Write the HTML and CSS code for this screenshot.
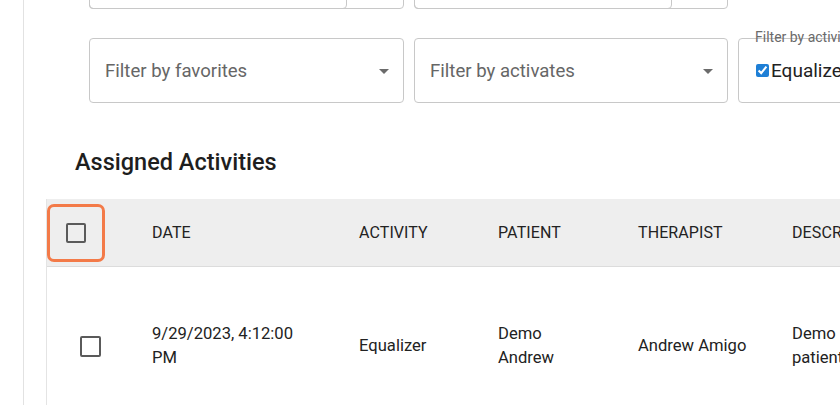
FILE: index.html
```html
<!DOCTYPE html>
<html lang="en">
  <head>
    <meta charset="UTF-8" />
    <meta name="viewport" content="width=device-width, initial-scale=1.0" />
    <title>Assigned Activities</title>
    <link rel="stylesheet" href="styles.css">
  </head>
  <body>
    <div class="layout">
      <aside class="sidebar"></aside>

      <main class="content">
        <div class="filters">
          <div class="field field-date"><div class="field-inner"></div></div>
          <div class="field field-date"><div class="field-inner"></div></div>

          <div class="field field-select row-start">
            <span class="placeholder">Filter by favorites</span>
            <span class="arrow"></span>
          </div>
          <div class="field field-select">
            <span class="placeholder">Filter by activates</span>
            <span class="arrow"></span>
          </div>
          <div class="field field-checks">
            <span class="legend">Filter by activities</span>
            <label class="check">
              <input type="checkbox" checked />
              <span>Equalizer</span>
            </label>
          </div>
        </div>

        <h2 class="title">Assigned Activities</h2>

        <div class="grid">
          <div class="grid-row grid-head">
            <div class="cell cell-check">
              <span class="focus-ring"><span class="box"></span></span>
            </div>
            <div class="cell">DATE</div>
            <div class="cell">ACTIVITY</div>
            <div class="cell">PATIENT</div>
            <div class="cell">THERAPIST</div>
            <div class="cell">DESCRIPTION</div>
          </div>

          <div class="grid-row grid-body">
            <div class="cell cell-check"><span class="box box-row"></span></div>
            <div class="cell"><span class="wrap w-date">9/29/2023, 4:12:00 PM</span></div>
            <div class="cell">Equalizer</div>
            <div class="cell"><span class="wrap w-patient">Demo Andrew</span></div>
            <div class="cell">Andrew Amigo</div>
            <div class="cell"><span class="wrap w-desc">Demo patient</span></div>
          </div>
        </div>
      </main>
    </div>
  </body>
</html>
```

FILE: styles.css
```css
body {
  margin: 0;
  font-family: Roboto, "Liberation Sans", sans-serif;
  background-color: #ffffff;
  color: #222222;
  overflow: hidden;
}

.layout {
  display: flex;
  height: 405px;
}

.sidebar {
  width: 23px;
  flex-shrink: 0;
  border-right: 1px solid #e2e2e2;
}

.content {
  flex: 1;
  min-width: 0;
}

/* filters */

.filters {
  display: grid;
  grid-template-columns: 315px 314px 314px;
  column-gap: 10px;
  row-gap: 29px;
  margin: -56px 0 0 65px;
}

.row-start {
  grid-column-start: 1;
}

.field {
  height: 65px;
  box-sizing: border-box;
  border: 1px solid #c8c8c8;
  border-radius: 4px;
  display: flex;
  align-items: center;
  position: relative;
}

.field-date {
  align-items: stretch;
}

.field-inner {
  width: 256px;
  margin: -1px 0 -1px -1px;
  border: 1px solid #c8c8c8;
  border-radius: 4px;
}

.field-select {
  padding: 0 14px 0 15px;
  justify-content: space-between;
}

.placeholder {
  font-size: 18.6px;
  color: #666666;
}

.arrow {
  width: 0;
  height: 0;
  border-left: 5px solid transparent;
  border-right: 5px solid transparent;
  border-top: 5px solid #6b6b6b;
  margin-top: 1px;
}

.field-checks {
  padding-left: 17px;
}

.legend {
  position: absolute;
  top: -10px;
  left: 16px;
  font-size: 14px;
  color: #6a6a6a;
  white-space: nowrap;
}

.check {
  display: flex;
  align-items: center;
  font-size: 19px;
  color: #222222;
}

.check input {
  width: 13px;
  height: 13px;
  margin: 0 2px 0 0;
  accent-color: #1e7fd6;
}

/* table */

.title {
  margin: 45px 0 23px 51px;
  font-size: 23.5px;
  line-height: 28px;
  font-weight: 500;
  color: #1e1e1e;
}

.grid {
  margin-left: 22px;
  border-left: 1px solid #e4e4e4;
  width: 900px;
}

.grid-row {
  display: grid;
  grid-template-columns: 105px 207px 139px 140px 154px 155px;
  align-items: center;
}

.grid-head {
  height: 67px;
  background-color: #eeeeee;
  border-bottom: 1px solid #dcdcdc;
  font-size: 16px;
  letter-spacing: 0.1px;
}

.grid-body {
  height: 158px;
  font-size: 16.6px;
  line-height: 24px;
}

.cell-check {
  display: flex;
}

.focus-ring {
  width: 52px;
  height: 52px;
  border: 3px solid #f37a48;
  border-radius: 7px;
  display: flex;
  align-items: center;
  justify-content: center;
}

.box {
  width: 16px;
  height: 16px;
  border: 2px solid #5a5a5a;
  border-radius: 2px;
}

.box-row {
  margin-left: 33px;
  width: 17px;
  height: 17px;
}

.wrap {
  display: block;
}

.w-date {
  width: 155px;
}

.w-patient {
  width: 82px;
}

.w-desc {
  width: 52px;
}
```
